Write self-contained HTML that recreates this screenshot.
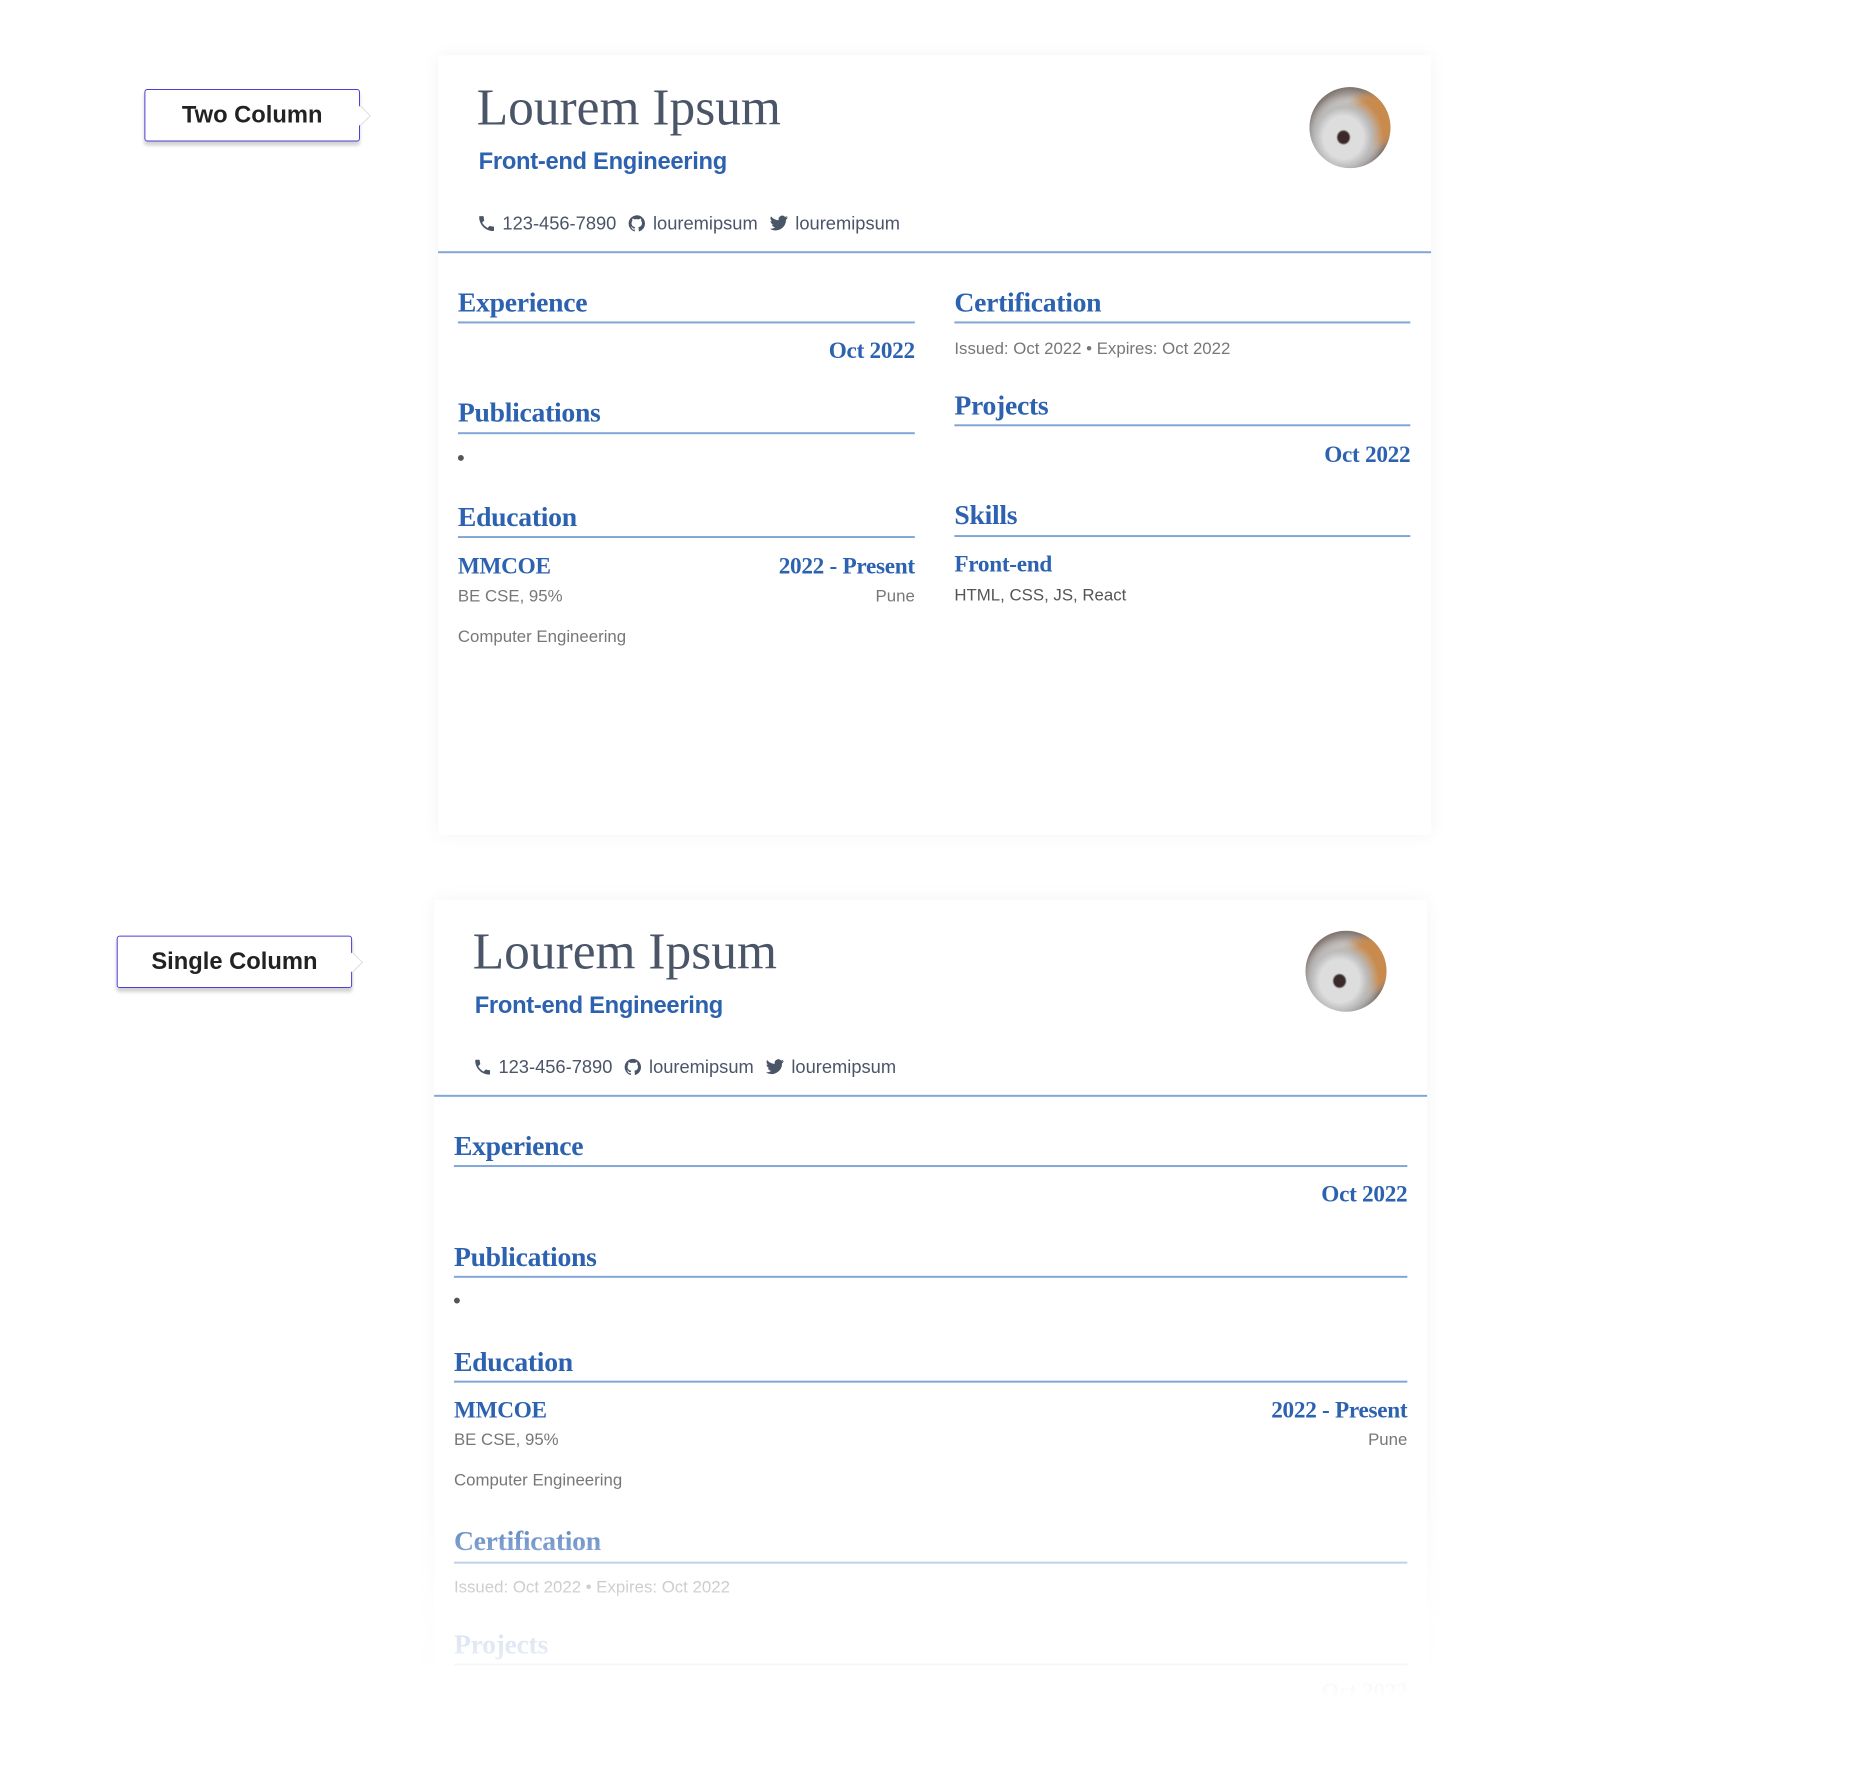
<!DOCTYPE html>
<html><head><meta charset="utf-8"><style>
*{margin:0;padding:0;box-sizing:border-box}
body{width:1864px;height:1769px;background:#fff;position:relative;overflow:hidden;font-family:"Liberation Sans",sans-serif}
#w{position:absolute;left:0;top:2px;width:1890px;height:1790px;transform:scale(0.989);transform-origin:0 0}
.a{position:absolute;white-space:nowrap}
.lbl{position:absolute;border:1.5px solid #4b3fd6;border-radius:3px;background:#fff;box-shadow:0 4px 4px rgba(0,0,0,.18);font-weight:bold;font-size:24px;color:#222;display:flex;align-items:center;justify-content:center}
.lbl:after{content:"";position:absolute;right:-9px;top:50%;width:14px;height:14px;background:#fff;border-top:1.5px solid #ddd;border-right:1.5px solid #ddd;transform:translateY(-50%) rotate(45deg)}
.card{position:absolute;background:#fff;box-shadow:0 0 18px rgba(0,0,0,.05)}
.name{font-family:"Liberation Serif",serif;font-size:52px;color:#4a5568}
.sub{font-size:24px;color:#2c62b0;font-weight:bold;letter-spacing:-.3px}
.ct{font-size:18.5px;color:#4a5568;display:flex;align-items:center}
.ct svg{margin-right:6px}
.ct span{margin-right:11px}
.h{font-family:"Liberation Serif",serif;font-size:28px;color:#2c62b0;font-weight:bold;letter-spacing:-.3px}
.ln{position:absolute;height:1.5px;background:#7fa6d6}
.d{font-family:"Liberation Serif",serif;font-size:23.5px;color:#2c62b0;font-weight:bold;letter-spacing:-.3px}
.s{font-size:17px;color:#777}
.dot{position:absolute;width:6px;height:6px;border-radius:50%;background:#555}
.av{position:absolute;border-radius:50%;background:radial-gradient(ellipse at 42% 62%,#3a2a2a 0 8%,#ddd 11% 30%,#bbb 42%,transparent 60%),radial-gradient(circle at 80% 40%,#c98b4d 0 25%,transparent 40%),radial-gradient(circle at 50% 50%,#cfc8c4 0 45%,#6e625e 75%)}
</style></head><body><div id="w">

<div class="lbl" style="left:146px;top:88px;width:218px;height:53px">Two Column</div>
<div class="card" style="left:443px;top:54px;width:1004px;height:788px"></div>
<div class="a name" style="left:482px;top:78px">Lourem Ipsum</div>
<div class="a sub" style="left:484px;top:148px">Front-end Engineering</div>
<div class="av" style="left:1324px;top:86px;width:82px;height:82px"></div>
<div class="a ct" style="left:482px;top:213px">
<svg width="20" height="20" viewBox="0 0 24 24"><path fill="#4a5568" d="M6.6 10.8c1.4 2.8 3.8 5.1 6.6 6.6l2.2-2.2c.3-.3.7-.4 1-.2 1.1.4 2.3.6 3.6.6.6 0 1 .4 1 1V20c0 .6-.4 1-1 1C10.6 21 3 13.4 3 4c0-.6.4-1 1-1h3.5c.6 0 1 .4 1 1 0 1.3.2 2.5.6 3.6.1.3 0 .7-.2 1z"/></svg><span>123-456-7890</span>
<svg width="20" height="20" viewBox="0 0 24 24"><path fill="#4a5568" d="M12 2a10 10 0 0 0-3.2 19.5c.5.1.7-.2.7-.5v-1.7c-2.8.6-3.4-1.3-3.4-1.3-.5-1.2-1.1-1.5-1.1-1.5-.9-.6.1-.6.1-.6 1 .1 1.5 1 1.5 1 .9 1.5 2.3 1.1 2.9.8.1-.6.3-1.1.6-1.3-2.2-.3-4.6-1.1-4.6-5 0-1.1.4-2 1-2.7-.1-.3-.4-1.3.1-2.7 0 0 .8-.3 2.7 1a9.4 9.4 0 0 1 5 0c1.9-1.3 2.7-1 2.7-1 .5 1.4.2 2.4.1 2.7.6.7 1 1.6 1 2.7 0 3.9-2.4 4.7-4.6 5 .4.3.7.9.7 1.9V21c0 .3.2.6.7.5A10 10 0 0 0 12 2z"/></svg><span>louremipsum</span>
<svg width="21" height="20" viewBox="0 0 24 24"><path fill="#4a5568" d="M23 4.6c-.8.4-1.7.6-2.6.7.9-.6 1.6-1.4 2-2.5-.9.5-1.9.9-2.9 1.1a4.5 4.5 0 0 0-7.7 4.1C8 7.8 4.7 6 2.5 3.3c-1.3 2.2-.4 4.8 1.4 6-.7 0-1.4-.2-2-.6 0 2.2 1.6 4 3.6 4.5-.7.2-1.4.2-2 .1.6 1.8 2.3 3.1 4.2 3.1A9 9 0 0 1 1 18.3 12.8 12.8 0 0 0 20.7 7.4c.9-.7 1.7-1.5 2.3-2.8z"/></svg><span>louremipsum</span></div>
<div class="ln" style="left:443px;top:252px;width:1004px"></div>

<div class="a h" style="left:463px;top:289px">Experience</div>
<div class="ln" style="left:463px;top:323px;width:462px"></div>
<div class="a d" style="right:965px;top:340px">Oct 2022</div>
<div class="a h" style="left:463px;top:400px">Publications</div>
<div class="ln" style="left:463px;top:435px;width:462px"></div>
<div class="dot" style="left:463px;top:458px"></div>
<div class="a h" style="left:463px;top:506px">Education</div>
<div class="ln" style="left:463px;top:540px;width:462px"></div>
<div class="a d" style="left:463px;top:558px">MMCOE</div>
<div class="a d" style="right:965px;top:558px">2022 - Present</div>
<div class="a s" style="left:463px;top:591px">BE CSE, 95%</div>
<div class="a s" style="right:965px;top:591px">Pune</div>
<div class="a s" style="left:463px;top:632px">Computer Engineering</div>

<div class="a h" style="left:965px;top:289px">Certification</div>
<div class="ln" style="left:965px;top:323px;width:461px"></div>
<div class="a s" style="left:965px;top:341px">Issued: Oct 2022 • Expires: Oct 2022</div>
<div class="a h" style="left:965px;top:393px">Projects</div>
<div class="ln" style="left:965px;top:427px;width:461px"></div>
<div class="a d" style="right:464px;top:445px">Oct 2022</div>
<div class="a h" style="left:965px;top:504px">Skills</div>
<div class="ln" style="left:965px;top:539px;width:461px"></div>
<div class="a d" style="left:965px;top:556px">Front-end</div>
<div class="a s" style="left:965px;top:590px;color:#555">HTML, CSS, JS, React</div>

<div class="lbl" style="left:118px;top:944px;width:238px;height:53px">Single Column</div>
<div class="card" style="left:439px;top:908px;width:1004px;height:790px"></div>
<div class="a name" style="left:478px;top:931px">Lourem Ipsum</div>
<div class="a sub" style="left:480px;top:1001px">Front-end Engineering</div>
<div class="av" style="left:1320px;top:939px;width:82px;height:82px"></div>
<div class="a ct" style="left:478px;top:1066px">
<svg width="20" height="20" viewBox="0 0 24 24"><path fill="#4a5568" d="M6.6 10.8c1.4 2.8 3.8 5.1 6.6 6.6l2.2-2.2c.3-.3.7-.4 1-.2 1.1.4 2.3.6 3.6.6.6 0 1 .4 1 1V20c0 .6-.4 1-1 1C10.6 21 3 13.4 3 4c0-.6.4-1 1-1h3.5c.6 0 1 .4 1 1 0 1.3.2 2.5.6 3.6.1.3 0 .7-.2 1z"/></svg><span>123-456-7890</span>
<svg width="20" height="20" viewBox="0 0 24 24"><path fill="#4a5568" d="M12 2a10 10 0 0 0-3.2 19.5c.5.1.7-.2.7-.5v-1.7c-2.8.6-3.4-1.3-3.4-1.3-.5-1.2-1.1-1.5-1.1-1.5-.9-.6.1-.6.1-.6 1 .1 1.5 1 1.5 1 .9 1.5 2.3 1.1 2.9.8.1-.6.3-1.1.6-1.3-2.2-.3-4.6-1.1-4.6-5 0-1.1.4-2 1-2.7-.1-.3-.4-1.3.1-2.7 0 0 .8-.3 2.7 1a9.4 9.4 0 0 1 5 0c1.9-1.3 2.7-1 2.7-1 .5 1.4.2 2.4.1 2.7.6.7 1 1.6 1 2.7 0 3.9-2.4 4.7-4.6 5 .4.3.7.9.7 1.9V21c0 .3.2.6.7.5A10 10 0 0 0 12 2z"/></svg><span>louremipsum</span>
<svg width="21" height="20" viewBox="0 0 24 24"><path fill="#4a5568" d="M23 4.6c-.8.4-1.7.6-2.6.7.9-.6 1.6-1.4 2-2.5-.9.5-1.9.9-2.9 1.1a4.5 4.5 0 0 0-7.7 4.1C8 7.8 4.7 6 2.5 3.3c-1.3 2.2-.4 4.8 1.4 6-.7 0-1.4-.2-2-.6 0 2.2 1.6 4 3.6 4.5-.7.2-1.4.2-2 .1.6 1.8 2.3 3.1 4.2 3.1A9 9 0 0 1 1 18.3 12.8 12.8 0 0 0 20.7 7.4c.9-.7 1.7-1.5 2.3-2.8z"/></svg><span>louremipsum</span></div>
<div class="ln" style="left:439px;top:1105px;width:1004px"></div>

<div class="a h" style="left:459px;top:1142px">Experience</div>
<div class="ln" style="left:459px;top:1176px;width:964px"></div>
<div class="a d" style="right:467px;top:1193px">Oct 2022</div>
<div class="a h" style="left:459px;top:1254px">Publications</div>
<div class="ln" style="left:459px;top:1288px;width:964px"></div>
<div class="dot" style="left:459px;top:1310px"></div>
<div class="a h" style="left:459px;top:1360px">Education</div>
<div class="ln" style="left:459px;top:1394px;width:964px"></div>
<div class="a d" style="left:459px;top:1411px">MMCOE</div>
<div class="a d" style="right:467px;top:1411px">2022 - Present</div>
<div class="a s" style="left:459px;top:1444px">BE CSE, 95%</div>
<div class="a s" style="right:467px;top:1444px">Pune</div>
<div class="a s" style="left:459px;top:1485px">Computer Engineering</div>
<div class="a h" style="left:459px;top:1541px">Certification</div>
<div class="ln" style="left:459px;top:1577px;width:964px"></div>
<div class="a s" style="left:459px;top:1593px">Issued: Oct 2022 • Expires: Oct 2022</div>
<div class="a h" style="left:459px;top:1646px">Projects</div>
<div class="ln" style="left:459px;top:1680px;width:964px"></div>
<div class="a d" style="right:467px;top:1696px">Oct 2022</div>
<div style="position:absolute;left:420px;top:1500px;width:1050px;height:300px;background:linear-gradient(rgba(255,255,255,0),rgba(255,255,255,.75) 40%,#fff 72%)"></div>
</div></body></html>
